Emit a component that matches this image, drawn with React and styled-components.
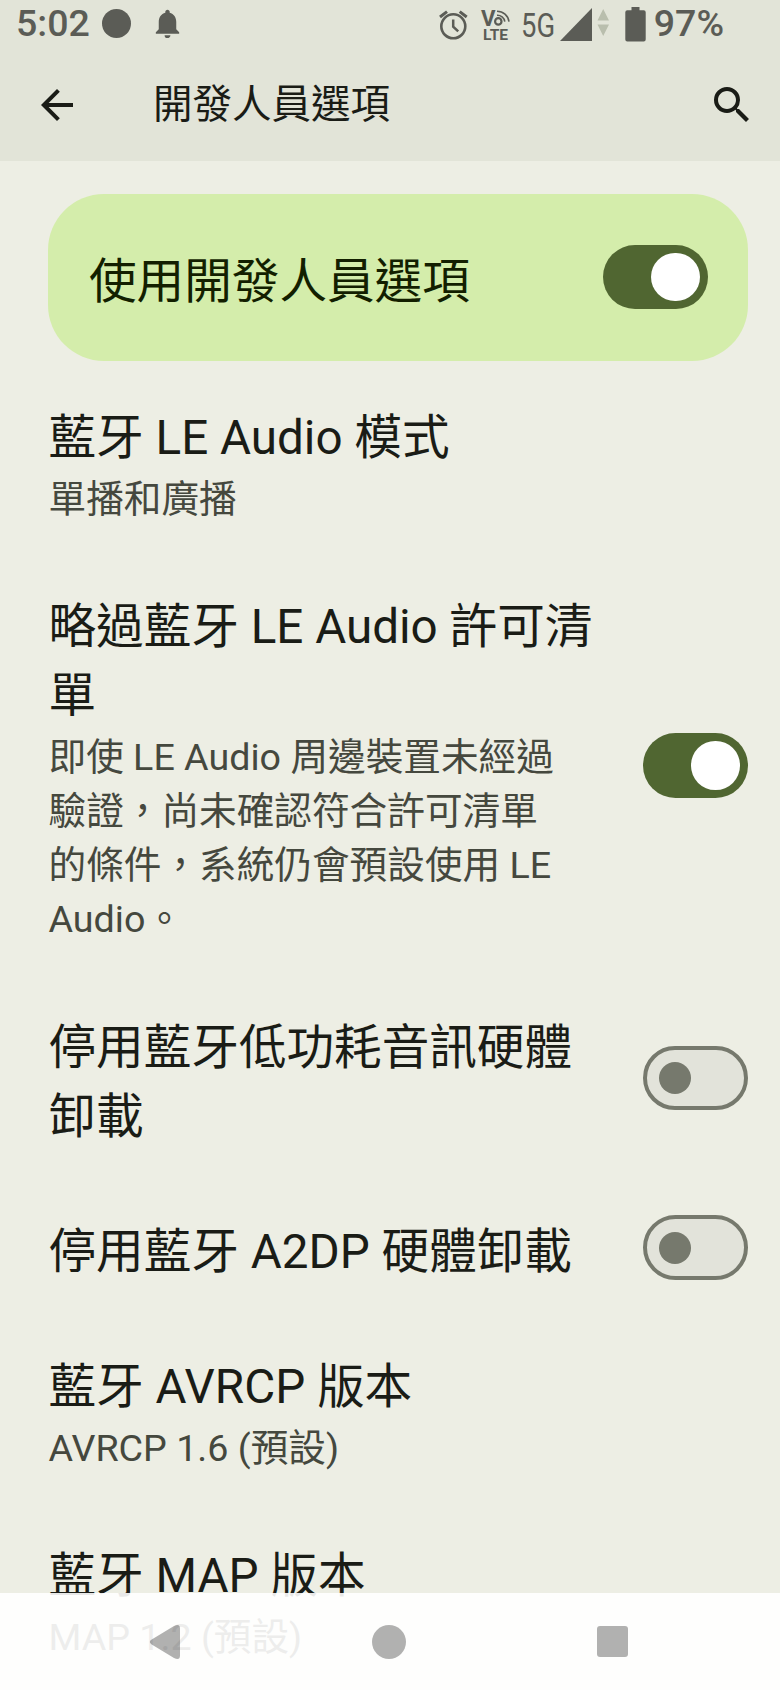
import { useState } from "react";
import styled, { createGlobalStyle } from "styled-components";
import { MdArrowBack, MdNotifications, MdSearch } from "react-icons/md";

const settings = [
  { id: "leMode", title: "藍牙 LE Audio 模式", summary: "單播和廣播" },
  {
    id: "leAllowList",
    title: "略過藍牙 LE Audio 許可清單",
    summary: "即使 LE Audio 周邊裝置未經過驗證，尚未確認符合許可清單的條件，系統仍會預設使用 LE Audio。",
    toggle: true,
  },
  { id: "leOffload", title: "停用藍牙低功耗音訊硬體卸載", toggle: true },
  { id: "a2dpOffload", title: "停用藍牙 A2DP 硬體卸載", toggle: true },
  { id: "avrcp", title: "藍牙 AVRCP 版本", summary: "AVRCP 1.6 (預設)" },
  { id: "map", title: "藍牙 MAP 版本", summary: "MAP 1.2 (預設)" },
];

const AlarmIcon = () => (
  <svg width="29" height="30" viewBox="0 0 29 30" fill="none" stroke="currentColor">
    <circle cx="14.3" cy="16.3" r="12" strokeWidth="2.6" />
    <path d="M14.2 9.5v7.2l5 4.7" strokeWidth="2.5" />
    <path d="M1 7 8 1.6M20.7 1.6 27.7 7" strokeWidth="3" />
  </svg>
);

const VoLteIcon = () => (
  <svg width="30" height="32" viewBox="0 0 30 32" overflow="visible">
    <g fontFamily="Roboto, sans-serif" fontWeight="700" fill="currentColor">
      <text x="0" y="17.5" fontSize="22" textLength="14.5" lengthAdjust="spacingAndGlyphs">V</text>
      <text x="2" y="32" fontSize="15" textLength="25" lengthAdjust="spacingAndGlyphs">LTE</text>
    </g>
    <g fill="none" stroke="currentColor">
      <circle cx="17.3" cy="13.4" r="3.2" strokeWidth="2.2" />
      <path d="M16 7.3a7.5 7.5 0 0 1 7.8 6.3" strokeWidth="1.6" />
      <path d="M16 3.2a12 12 0 0 1 12 10.5" strokeWidth="1.6" />
    </g>
  </svg>
);

const SignalIcon = () => (
  <svg width="49" height="34" viewBox="0 0 49 34">
    <path d="M0 33 32 0v33z" fill="currentColor" />
    <path d="M37.5 12.5 43.2 1 49 12.5zM37.5 16.5h11.5l-5.8 11.5z" fill="#b9bead" />
  </svg>
);

const BatteryIcon = () => (
  <svg width="21" height="35" viewBox="0 0 21 35">
    <path d="M6.5 0h8v3.2h4.2a2 2 0 0 1 2 2v27.3a2 2 0 0 1-2 2H2.3a2 2 0 0 1-2-2V5.2a2 2 0 0 1 2-2h4.2z" fill="currentColor" />
  </svg>
);

const App = () => {
  const [enabled, setEnabled] = useState({ developer: true, leAllowList: true });

  const flip = (id) => {
    setEnabled({ ...enabled, [id]: !enabled[id] });
  };

  return (
    <>
      <GlobalStyle />
      <Screen>
        <Header>
          <StatusBar>
            <StatusText>5:02</StatusText>
            <Dot />
            <Bell><MdNotifications size={35} /></Bell>
            <StatusRight>
              <Alarm><AlarmIcon /></Alarm>
              <VoLteIcon />
              <Network><span>5G</span></Network>
              <Signal><SignalIcon /></Signal>
              <Battery><BatteryIcon /></Battery>
              <StatusText>97%</StatusText>
            </StatusRight>
          </StatusBar>
          <Toolbar>
            <IconButton aria-label="返回"><MdArrowBack size={48} /></IconButton>
            <PageTitle>開發人員選項</PageTitle>
            <IconButton aria-label="搜尋"><MdSearch size={48} /></IconButton>
          </Toolbar>
        </Header>

        <MainSwitch>
          <MainLabel>使用開發人員選項</MainLabel>
          <Switch role="switch" aria-checked={!!enabled.developer} $on={enabled.developer} onClick={() => flip("developer")}>
            <Thumb $on={enabled.developer} />
          </Switch>
        </MainSwitch>

        <List>
          {settings.map((item) => (
            <Row key={item.id}>
              <RowText>
                <Title>{item.title}</Title>
                {item.summary && <Summary>{item.summary}</Summary>}
              </RowText>
              {item.toggle && (
                <Switch role="switch" aria-checked={!!enabled[item.id]} $on={enabled[item.id]} onClick={() => flip(item.id)}>
                  <Thumb $on={enabled[item.id]} />
                </Switch>
              )}
            </Row>
          ))}
        </List>

        <NavBar>
          <svg width="31" height="36" viewBox="0 0 31 36">
            <path d="M2.3 15.8 25 2Q31 -1 31 4.5v27q0 5.500-6 2.500L2.3 20.200q-3-2.200 0-4.400z" fill="currentColor" />
          </svg>
          <HomeKey />
          <RecentKey />
        </NavBar>
      </Screen>
    </>
  );
};

const GlobalStyle = createGlobalStyle`
  * {
    box-sizing: border-box;
  }
  body {
    margin: 0;
    background: #edeee4;
    font-family: Roboto, "Noto Sans CJK TC", sans-serif;
  }
`;

const Screen = styled.div`
  position: relative;
  width: 780px;
  height: 1690px;
  overflow: hidden;
  background: #edeee4;
  color: #1a1c16;
`;

const Header = styled.header`
  height: 161px;
  background: #e2e4d8;
`;

const StatusBar = styled.div`
  display: flex;
  align-items: center;
  height: 47px;
  padding: 0 56px 0 16px;
  color: #5b5c56;
`;

const StatusText = styled.span`
  font-size: 37.5px;
  font-weight: 500;
  line-height: 47px;
`;

const Dot = styled.span`
  width: 29px;
  height: 29px;
  margin-left: 12px;
  border-radius: 50%;
  background: currentColor;
`;

const Bell = styled.span`
  display: flex;
  margin-left: 19px;
`;

const StatusRight = styled.div`
  display: flex;
  align-items: center;
  margin-left: auto;
`;

const Alarm = styled.span`
  display: flex;
  margin: 2px 13px 0 0;
`;

const Network = styled.span`
  width: 33px;
  margin: 3px 6px 0 10px;
  font-size: 33px;
  line-height: 47px;

  span {
    display: inline-block;
    transform: scaleX(0.83);
    transform-origin: left;
  }
`;

const Signal = styled.span`
  display: flex;
  margin-top: 3px;
`;

const Battery = styled.span`
  display: flex;
  margin: 2px 8px 0 16px;
`;

const Toolbar = styled.div`
  display: flex;
  align-items: center;
  height: 114px;
  padding: 1px 24.5px 0 33px;
`;

const IconButton = styled.button`
  display: flex;
  padding: 0;
  border: 0;
  background: none;
  color: inherit;
`;

const PageTitle = styled.h1`
  flex: 1;
  margin: 0 0 0 72px;
  font-size: 39.5px;
  font-weight: 400;
  line-height: 58px;
`;

const MainSwitch = styled.div`
  display: flex;
  align-items: center;
  justify-content: space-between;
  height: 167px;
  margin: 32.5px 32.5px 0 48px;
  padding: 0 40px 0 41px;
  border-radius: 56px;
  background: #d4edab;
  color: #131f00;
`;

const MainLabel = styled.span`
  padding-top: 10px;
  font-size: 47.6px;
  line-height: 69px;
`;

const Switch = styled.button`
  display: flex;
  flex: none;
  align-items: center;
  justify-content: ${({ $on }) => ($on ? "flex-end" : "flex-start")};
  width: 105px;
  height: 64.5px;
  padding: ${({ $on }) => ($on ? "0 8px" : "0 12px")};
  border: 4px solid ${({ $on }) => ($on ? "#506631" : "#76796d")};
  border-width: ${({ $on }) => ($on ? "0" : "4px")};
  border-radius: 33px;
  background: ${({ $on }) => ($on ? "#506631" : "#e2e3da")};
`;

const Thumb = styled.span`
  width: ${({ $on }) => ($on ? "48.5px" : "32px")};
  height: ${({ $on }) => ($on ? "48.5px" : "32px")};
  border-radius: 50%;
  background: ${({ $on }) => ($on ? "#fff" : "#76796d")};
`;

const List = styled.div`
  padding-top: 5.5px;
`;

const Row = styled.div`
  display: flex;
  align-items: center;
  justify-content: space-between;
  padding: 28.3px 32.5px 28.3px 48.5px;
`;

const RowText = styled.div`
  width: 555px;
  padding-top: 9.6px;
`;

const Title = styled.div`
  font-size: 47.6px;
  line-height: 69px;
`;

const Summary = styled.div`
  max-width: 520px;
  margin: -1.4px 0 1.4px;
  color: #45483e;
  font-size: 37.65px;
  line-height: 54.1px;
`;

const NavBar = styled.nav`
  position: absolute;
  right: 0;
  bottom: 0;
  left: 0;
  display: flex;
  align-items: center;
  justify-content: space-between;
  height: 97px;
  padding: 0 152px 0 149px;
  background: rgba(255, 255, 255, 0.9);
  color: rgba(0, 0, 0, 0.3);
`;

const HomeKey = styled.span`
  width: 34px;
  height: 34px;
  border-radius: 50%;
  background: currentColor;
`;

const RecentKey = styled.span`
  width: 31px;
  height: 31px;
  border-radius: 3px;
  background: currentColor;
`;

export default App;
